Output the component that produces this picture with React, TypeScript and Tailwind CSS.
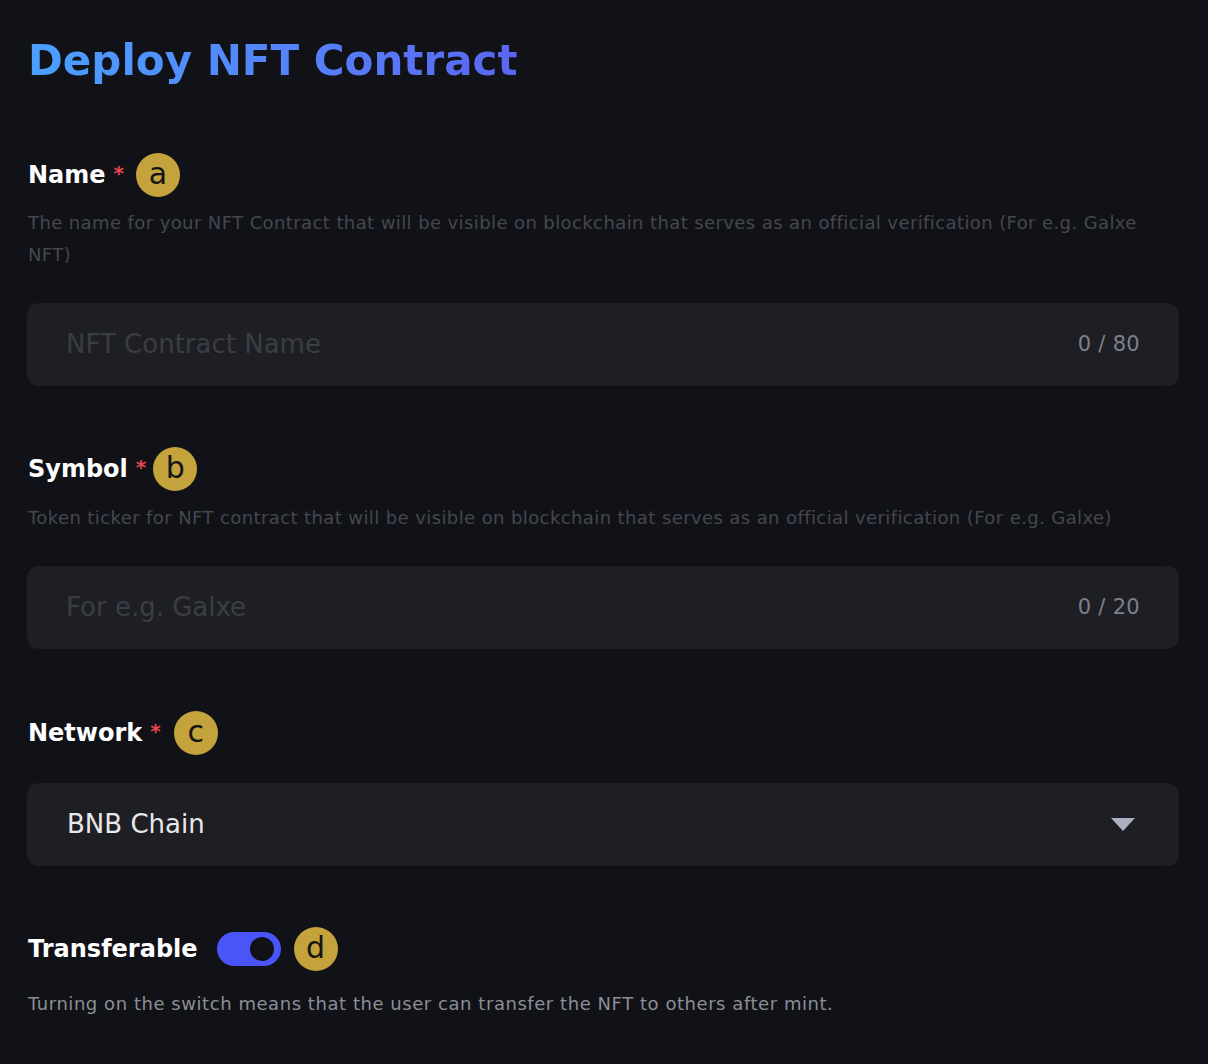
import React from "react";

const font = { fontFamily: '"DejaVu Sans", "Open Sans", sans-serif' };

function Badge({ ch }: { ch: string }) {
  return (
    <span className="flex h-[44px] w-[44px] items-center justify-center rounded-full bg-[#c4a23c] text-[30px] leading-none text-[#141414]">
      <span className="-mt-[3px]">{ch}</span>
    </span>
  );
}

function Label({ text, badge, gap }: { text: string; badge: string; gap: string }) {
  return (
    <div className="flex h-[44px] items-center">
      <span className="text-[24px] font-bold text-white">{text}</span>
      <span className="ml-[8px] -mt-[4px] text-[20px] font-bold text-[#e5484d]">*</span>
      <span className={gap}>
        <Badge ch={badge} />
      </span>
    </div>
  );
}

function Input({ placeholder, counter }: { placeholder: string; counter: string }) {
  return (
    <div className="flex h-[83px] items-center justify-between rounded-[12px] bg-[#1e1f24] pl-[39px] pr-[39px]">
      <span className="text-[26px] text-[#3b3d44]">{placeholder}</span>
      <span className="text-[21px] tracking-[0.3px] text-[#7d8089]">{counter}</span>
    </div>
  );
}

export default function App() {
  return (
    <div className="min-h-[1064px] w-[1208px] bg-[#111217] pl-[27px] pr-[29px] pt-[35px]" style={font}>
      <div className="flex h-[52px] items-center pl-[1px]">
        <h1 className="bg-gradient-to-r from-[#4aa0ff] to-[#5a66f2] bg-clip-text text-[42px] font-bold leading-[52px] text-transparent">
          Deploy NFT Contract
        </h1>
      </div>

      <div className="mt-[66px] pl-[1px]">
        <Label text="Name" badge="a" gap="ml-[12px]" />
      </div>
      <p className="mt-[10px] pl-[1px] text-[18px] leading-[32px] tracking-[0.4px] text-[#44474f]">
        The name for your NFT Contract that will be visible on blockchain that serves as an official verification (For e.g. Galxe NFT)
      </p>
      <div className="mt-[32px]">
        <Input placeholder="NFT Contract Name" counter="0 / 80" />
      </div>

      <div className="mt-[61px] pl-[1px]">
        <Label text="Symbol" badge="b" gap="ml-[7px]" />
      </div>
      <p className="mt-[11px] pl-[1px] text-[18px] leading-[32px] tracking-[0.4px] text-[#44474f]">
        Token ticker for NFT contract that will be visible on blockchain that serves as an official verification (For e.g. Galxe)
      </p>
      <div className="mt-[32px]">
        <Input placeholder="For e.g. Galxe" counter="0 / 20" />
      </div>

      <div className="mt-[62px] pl-[1px]">
        <Label text="Network" badge="c" gap="ml-[13px]" />
      </div>
      <div className="mt-[28px] flex h-[83px] items-center justify-between rounded-[12px] bg-[#1e1f24] pl-[40px] pr-[44px]">
        <span className="text-[26px] text-[#e8e8ea]">BNB Chain</span>
        <svg width="24" height="13" viewBox="0 0 24 13">
          <path d="M0 0 H24 L12 13 Z" fill="#aab0c0" />
        </svg>
      </div>

      <div className="mt-[61px] flex h-[44px] items-center pl-[1px]">
        <span className="text-[24px] font-bold text-white">Transferable</span>
        <div className="ml-[19px] flex h-[34px] w-[64px] items-center justify-end rounded-full bg-[#4a55f8] pr-[7px]">
          <div className="h-[24px] w-[24px] rounded-full bg-[#111217]" />
        </div>
        <span className="ml-[13px]">
          <Badge ch="d" />
        </span>
      </div>
      <p className="mt-[17px] pl-[1px] text-[18px] leading-[32px] tracking-[0.55px] text-[#8b8e96]">
        Turning on the switch means that the user can transfer the NFT to others after mint.
      </p>
    </div>
  );
}
